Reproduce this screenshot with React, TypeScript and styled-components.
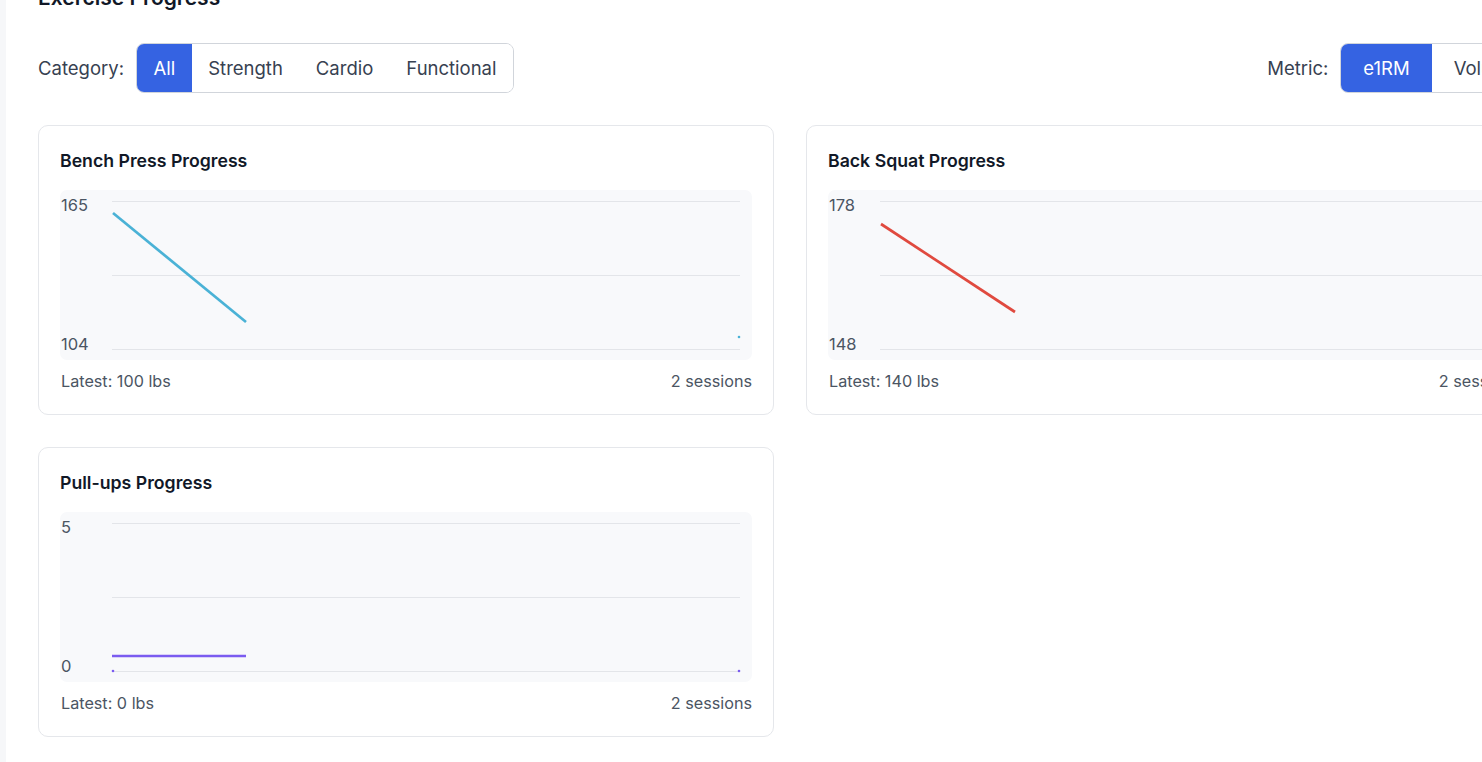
import React from "react";
import styled, { createGlobalStyle } from "styled-components";

const GlobalStyle = createGlobalStyle`
  html, body { margin: 0; padding: 0; overflow: hidden; background: #f6f7f9; }
  body { font-family: Inter, "Noto Sans", "Liberation Sans", sans-serif; color: #111827; }
  * { box-sizing: border-box; }
`;

const Shell = styled.div`
  display: flex;
  min-height: 762px;
  background: #f6f7f9;
`;

const Main = styled.main`
  flex: 0 0 auto;
  margin-left: 6px;
  padding: 0 32px 40px;
  background: #ffffff;
  min-height: 762px;
`;

const Heading = styled.h2`
  margin: -16px 0 0;
  font-size: 21px;
  line-height: 28px;
  font-weight: 600;
  color: #111827;
`;

const FilterBar = styled.div`
  display: flex;
  justify-content: space-between;
  align-items: center;
  width: 1504px;
  margin-top: 31px;
`;

const FilterGroup = styled.div`
  display: flex;
  align-items: center;
  gap: 12px;
`;

const FilterLabel = styled.span`
  font-size: 18.5px;
  line-height: 24px;
  color: #374151;
`;

const Segmented = styled.div`
  display: flex;
  border: 1px solid #d1d5db;
  border-radius: 8px;
  overflow: hidden;
  background: #fff;
`;

const SegButton = styled.button<{ $active?: boolean; $pad: number }>`
  border: none;
  margin: 0;
  font-family: inherit;
  font-size: 18.5px;
  line-height: 24px;
  padding: 12px ${(p) => p.$pad}px;
  background: ${(p) => (p.$active ? "#3563e2" : "#ffffff")};
  color: ${(p) => (p.$active ? "#ffffff" : "#374151")};
  cursor: pointer;
`;

const Grid = styled.div`
  display: grid;
  grid-template-columns: repeat(2, 736px);
  gap: 32px;
  margin-top: 32px;
`;

const Card = styled.section`
  border: 1px solid #e5e7eb;
  border-radius: 10px;
  padding: 21px;
  background: #fff;
  display: flex;
  flex-direction: column;
`;

const CardTitle = styled.h3`
  margin: 0;
  padding-top: 1px;
  font-size: 17.7px;
  line-height: 26px;
  font-weight: 600;
  color: #111827;
`;

const ChartBox = styled.div`
  margin-top: 16px;
  height: 170px;
  background: #f8f9fb;
  border-radius: 7px;
`;

const ChartSvg = styled.svg`
  display: block;
  width: 692px;
  height: 170px;
  margin-left: -1px;
`;

const Footer = styled.div`
  display: flex;
  justify-content: space-between;
  margin-top: 9px;
  padding-left: 1px;
  font-size: 16.2px;
  line-height: 24px;
  color: #4b5563;
`;

type Chart = {
  title: string;
  max: string;
  min: string;
  color: string;
  points: [number, number][];
  dot: [number, number];
  startDot?: [number, number];
  latest: string;
};

const charts: Chart[] = [
  {
    title: "Bench Press Progress",
    max: "165",
    min: "104",
    color: "#4ab2d6",
    points: [[54, 23], [187, 132]],
    dot: [680, 147],
    latest: "Latest: 100 lbs",
  },
  {
    title: "Back Squat Progress",
    max: "178",
    min: "148",
    color: "#e04a3f",
    points: [[54, 34], [188, 122]],
    dot: [680, 150],
    latest: "Latest: 140 lbs",
  },
  {
    title: "Pull-ups Progress",
    max: "5",
    min: "0",
    color: "#7b5cf0",
    points: [[53, 144], [187, 144]],
    dot: [680, 159],
    startDot: [54, 159],
    latest: "Latest: 0 lbs",
  },
];

const gridYs = [11, 85, 159];

function ProgressChart({ c }: { c: Chart }) {
  return (
    <ChartSvg viewBox="0 0 692 170">
      {gridYs.map((y) => (
        <line key={y} x1={53} x2={681} y1={y + 0.5} y2={y + 0.5} stroke="#e3e5e9" strokeWidth={1} />
      ))}
      <text x={2} y={21} fontSize={16.5} fill="#4b5563" fontFamily="Inter, sans-serif">
        {c.max}
      </text>
      <text x={2} y={160} fontSize={16.5} fill="#4b5563" fontFamily="Inter, sans-serif">
        {c.min}
      </text>
      <polyline
        points={c.points.map((p) => p.join(",")).join(" ")}
        fill="none"
        stroke={c.color}
        strokeWidth={2.7}
      />
      <circle cx={c.dot[0]} cy={c.dot[1]} r={1.3} fill={c.color} />
      {c.startDot && <circle cx={c.startDot[0]} cy={c.startDot[1]} r={1.3} fill={c.color} />}
    </ChartSvg>
  );
}

export default function App() {
  return (
    <>
      <GlobalStyle />
      <Shell>
        <Main>
          <Heading>Exercise Progress</Heading>
          <FilterBar>
            <FilterGroup>
              <FilterLabel>Category:</FilterLabel>
              <Segmented>
                {["All", "Strength", "Cardio", "Functional"].map((t, i) => (
                  <SegButton key={t} $active={i === 0} $pad={16.5}>
                    {t}
                  </SegButton>
                ))}
              </Segmented>
            </FilterGroup>
            <FilterGroup>
              <FilterLabel>Metric:</FilterLabel>
              <Segmented>
                {["e1RM", "Volume"].map((t, i) => (
                  <SegButton key={t} $active={i === 0} $pad={22}>
                    {t}
                  </SegButton>
                ))}
              </Segmented>
            </FilterGroup>
          </FilterBar>
          <Grid>
            {charts.map((c) => (
              <Card key={c.title}>
                <CardTitle>{c.title}</CardTitle>
                <ChartBox>
                  <ProgressChart c={c} />
                </ChartBox>
                <Footer>
                  <span>{c.latest}</span>
                  <span>2 sessions</span>
                </Footer>
              </Card>
            ))}
          </Grid>
        </Main>
      </Shell>
    </>
  );
}
